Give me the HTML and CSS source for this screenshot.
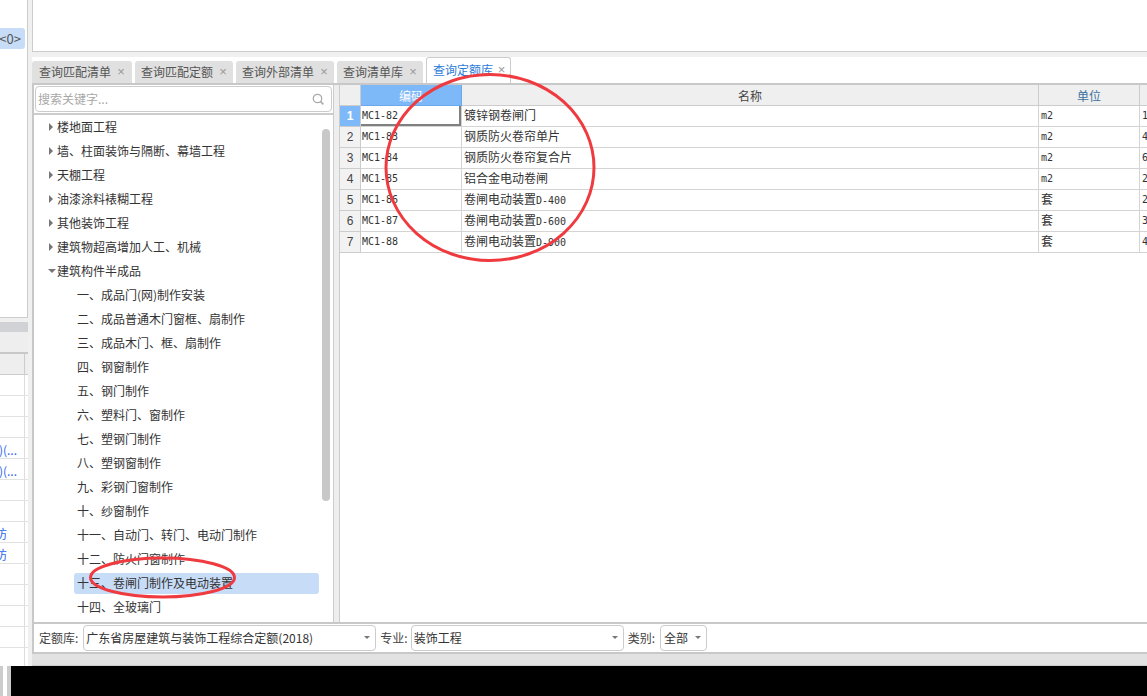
FILE: index.html
```html
<!DOCTYPE html>
<html lang="zh-CN">
<head>
  <meta charset="UTF-8" />
  <title>查询定额库</title>
  <link rel="stylesheet" href="styles.css">
</head>
<body>
  <div class="app">
    <div class="side">
      <div class="side-top">
        <div class="chip">&lt;0&gt;</div>
      </div>
      <div class="side-title"></div>
      <div class="side-tools"></div>
      <div class="side-row side-head"><span class="side-cell"></span></div>
      <div class="side-row"><span class="side-cell"></span></div>
      <div class="side-row"><span class="side-cell"></span></div>
      <div class="side-row"><span class="side-cell"></span></div>
      <div class="side-row"><span class="side-cell link wide">)(...</span></div>
      <div class="side-row"><span class="side-cell link wide">)(...</span></div>
      <div class="side-row"><span class="side-cell"></span></div>
      <div class="side-row"><span class="side-cell"></span></div>
      <div class="side-row"><span class="side-cell link">防</span></div>
      <div class="side-row"><span class="side-cell link">防</span></div>
      <div class="side-row"><span class="side-cell"></span></div>
      <div class="side-row"><span class="side-cell"></span></div>
      <div class="side-row"><span class="side-cell"></span></div>
      <div class="side-row"><span class="side-cell"></span></div>
      <div class="side-row"><span class="side-cell"></span></div>
    </div>

    <div class="main">
      <div class="top-pane"></div>

      <div class="tabs">
        <div class="tab">查询匹配清单<span class="tab-close">×</span></div>
        <div class="tab">查询匹配定额<span class="tab-close">×</span></div>
        <div class="tab">查询外部清单<span class="tab-close">×</span></div>
        <div class="tab">查询清单库<span class="tab-close">×</span></div>
        <div class="tab active">查询定额库<span class="tab-close">×</span></div>
      </div>

      <div class="panel">
        <div class="panel-body">
          <div class="tree-pane">
            <div class="search-wrap">
              <div class="search">
                <span class="search-text">搜索关键字...</span>
                <svg class="search-icon" width="14" height="14" viewBox="0 0 14 14">
                  <circle cx="6.5" cy="6.5" r="4.2" fill="none" stroke="#aaa" stroke-width="1.3"/>
                  <path d="M9.6 9.6L12.4 12.4" stroke="#aaa" stroke-width="1.6"/>
                </svg>
              </div>
            </div>
            <div class="tree">
              <div class="tree-row"><i class="arrow"></i>楼地面工程</div>
              <div class="tree-row"><i class="arrow"></i>墙、柱面装饰与隔断、幕墙工程</div>
              <div class="tree-row"><i class="arrow"></i>天棚工程</div>
              <div class="tree-row"><i class="arrow"></i>油漆涂料裱糊工程</div>
              <div class="tree-row"><i class="arrow"></i>其他装饰工程</div>
              <div class="tree-row"><i class="arrow"></i>建筑物超高增加人工、机械</div>
              <div class="tree-row"><i class="arrow open"></i>建筑构件半成品</div>
              <div class="tree-row child"><span class="tree-label">一、成品门(网)制作安装</span></div>
              <div class="tree-row child"><span class="tree-label">二、成品普通木门窗框、扇制作</span></div>
              <div class="tree-row child"><span class="tree-label">三、成品木门、框、扇制作</span></div>
              <div class="tree-row child"><span class="tree-label">四、钢窗制作</span></div>
              <div class="tree-row child"><span class="tree-label">五、钢门制作</span></div>
              <div class="tree-row child"><span class="tree-label">六、塑料门、窗制作</span></div>
              <div class="tree-row child"><span class="tree-label">七、塑钢门制作</span></div>
              <div class="tree-row child"><span class="tree-label">八、塑钢窗制作</span></div>
              <div class="tree-row child"><span class="tree-label">九、彩钢门窗制作</span></div>
              <div class="tree-row child"><span class="tree-label">十、纱窗制作</span></div>
              <div class="tree-row child"><span class="tree-label">十一、自动门、转门、电动门制作</span></div>
              <div class="tree-row child"><span class="tree-label">十二、防火门窗制作</span></div>
              <div class="tree-row child"><span class="tree-label selected">十三、卷闸门制作及电动装置</span></div>
              <div class="tree-row child"><span class="tree-label">十四、全玻璃门</span></div>
              <div class="tree-thumb"></div>
            </div>
          </div>

          <div class="splitter"></div>

          <div class="grid-wrap">
            <table class="grid">
              <colgroup>
                <col class="col-num"><col class="col-code"><col class="col-name"><col class="col-unit"><col class="col-more">
              </colgroup>
              <thead>
                <tr><th></th><th class="on">编码</th><th>名称</th><th class="unit-head">单位</th><th></th></tr>
              </thead>
              <tbody>
                <tr><th class="on">1</th><td class="mono code current">MC1-82</td><td>镀锌钢卷闸门</td><td class="mono">m2</td><td class="mono">1</td></tr>
                <tr><th>2</th><td class="mono code">MC1-83</td><td>钢质防火卷帘单片</td><td class="mono">m2</td><td class="mono">4</td></tr>
                <tr><th>3</th><td class="mono code">MC1-84</td><td>钢质防火卷帘复合片</td><td class="mono">m2</td><td class="mono">6</td></tr>
                <tr><th>4</th><td class="mono code">MC1-85</td><td>铝合金电动卷闸</td><td class="mono">m2</td><td class="mono">2</td></tr>
                <tr><th>5</th><td class="mono code">MC1-86</td><td>卷闸电动装置<span class="mono">D-400</span></td><td>套</td><td class="mono">2</td></tr>
                <tr><th>6</th><td class="mono code">MC1-87</td><td>卷闸电动装置<span class="mono">D-600</span></td><td>套</td><td class="mono">3</td></tr>
                <tr><th>7</th><td class="mono code">MC1-88</td><td>卷闸电动装置<span class="mono">D-900</span></td><td>套</td><td class="mono">4</td></tr>
              </tbody>
            </table>
          </div>
        </div>

        <div class="panel-foot">
          <label class="foot-label first">定额库:</label>
          <div class="select select-lib">广东省房屋建筑与装饰工程综合定额(2018)<i class="caret"></i></div>
          <label class="foot-label major">专业:</label>
          <div class="select select-major">装饰工程<i class="caret"></i></div>
          <label class="foot-label">类别:</label>
          <div class="select select-type">全部<i class="caret"></i></div>
        </div>
      </div>

      <div class="bottom-strip"></div>
    </div>
  </div>

  <div class="taskbar">
    <span class="bit-gray"></span><span class="bit-white"></span><span class="bit-gray wide"></span>
  </div>

  <!-- hand drawn marks on top of the screenshot -->
  <svg class="marks" width="1147" height="696" viewBox="0 0 1147 696">
    <ellipse cx="490" cy="167.5" rx="104" ry="93" />
    <ellipse cx="162.5" cy="577.5" rx="72" ry="19.5" />
  </svg>
</body>
</html>
```

FILE: styles.css
```css
* {
  box-sizing: border-box;
}

body {
  margin: 0;
  width: 1147px;
  height: 696px;
  position: relative;
  overflow: hidden;
  background-color: #f0f0f0;
  color: #333;
  font-family: "Noto Sans CJK SC", "Liberation Sans", sans-serif;
  font-size: 12px;
  line-height: 20px;
}

.app {
  display: flex;
  height: 666px;
}

/* left column, cut off by the window edge */
.side {
  width: 28px;
  flex-shrink: 0;
  overflow: hidden;
}

.side-top {
  height: 318px;
  padding-top: 28px;
  background-color: #fff;
  border-right: 1px solid #ccc;
  border-bottom: 1px solid #ccc;
}

.chip {
  display: flex;
  justify-content: flex-end;
  width: 25px;
  height: 21px;
  line-height: 21px;
  padding-right: 4px;
  background-color: #c7dcf7;
  border-radius: 0 3px 3px 0;
  color: #555;
  font-size: 13px;
  white-space: nowrap;
  overflow: hidden;
}

.side-title {
  height: 10px;
  margin-top: 4px;
  background-color: #d0d2d6;
}

.side-tools {
  height: 22px;
  background-color: #eee;
  border-bottom: 2px solid #c8c8c8;
}

.side-row {
  height: 21px;
  padding-right: 3px;
  background-color: #fff;
  border-bottom: 1px solid #e2e2e2;
}

.side-head {
  background-color: #eee;
  border-bottom-color: #ccc;
}

.side-cell {
  display: flex;
  justify-content: flex-end;
  height: 20px;
  padding-right: 17px;
  border-right: 1px solid #ddd;
  overflow: hidden;
  white-space: nowrap;
}

.side-cell.wide {
  padding-right: 7px;
}

.side-head .side-cell {
  border-right-color: #ccc;
}

.link {
  color: #2a66f0;
  line-height: 23px;
}

.main {
  flex: 1;
  min-width: 0;
  margin-left: 4px;
  display: flex;
  flex-direction: column;
}

.top-pane {
  height: 52px;
  flex-shrink: 0;
  background-color: #fff;
  border-left: 1px solid #ccc;
  border-bottom: 1px solid #ccc;
}

/* tabs */
.tabs {
  display: flex;
  align-items: flex-end;
  gap: 3px;
  height: 26px;
  margin-top: 5px;
  flex-shrink: 0;
  background-color: #fff;
}

.tab {
  display: flex;
  align-items: center;
  height: 22px;
  padding: 0 0 0 6px;
  background-color: #e0e0e0;
  border-radius: 3px 3px 0 0;
  color: #555;
  white-space: nowrap;
}

.tab:first-child {
  padding-left: 7px;
  padding-right: 1px;
}

.tab-close {
  width: 20px;
  text-align: center;
  color: #999;
  font-family: "Liberation Sans", sans-serif;
  font-size: 13px;
}

.tab.active {
  width: 85px;
  height: 26px;
  padding-bottom: 2px;
  background-color: #fff;
  border: 1px solid #ccc;
  border-bottom: none;
  color: #2b7cd9;
}

.tab.active .tab-close {
  width: 18px;
}

/* main panel */
.panel {
  display: flex;
  flex-direction: column;
  height: 571px;
  flex-shrink: 0;
  background-color: #fff;
  border-top: 2px solid #c8c8c8;
  border-bottom: 2px solid #c8c8c8;
  border-left: 2px solid #c8c8c8;
}

.panel-body {
  display: flex;
  flex: 1;
  min-height: 0;
}

.tree-pane {
  width: 300px;
  flex-shrink: 0;
  display: flex;
  flex-direction: column;
  border-right: 1px solid #ccc;
}

.search-wrap {
  height: 30px;
  padding: 1px 1px 0;
  flex-shrink: 0;
  border-bottom: 2px solid #ccc;
}

.search {
  display: flex;
  align-items: center;
  justify-content: space-between;
  height: 26px;
  padding: 0 6px 0 2px;
  border: 1px solid #ccc;
  border-radius: 4px;
}

.search-text {
  color: #a8a8a8;
}

.tree {
  position: relative;
  flex: 1;
  overflow: hidden;
}

.tree-row {
  display: flex;
  align-items: center;
  height: 24px;
  padding-left: 15px;
  white-space: nowrap;
}

.tree-row.child {
  padding-left: 40px;
}

.tree-label {
  display: block;
  width: 245px;
  height: 21px;
  padding-left: 3px;
  line-height: 20px;
  border-radius: 3px;
}

.tree-label.selected {
  background-color: #c7dcf7;
}

.arrow {
  width: 0;
  height: 0;
  margin-right: 4px;
  border-top: 4px solid transparent;
  border-bottom: 4px solid transparent;
  border-left: 4px solid #777;
}

.arrow.open {
  margin-left: -1px;
  margin-right: 1px;
  border-left: 4px solid transparent;
  border-right: 4px solid transparent;
  border-top: 4px solid #777;
  border-bottom: none;
}

.tree-thumb {
  position: absolute;
  top: 14px;
  left: 288px;
  width: 8px;
  height: 372px;
  border-radius: 4px;
  background-color: #c8c8c8;
}

.splitter {
  width: 6px;
  flex-shrink: 0;
  background-color: #eee;
  border-right: 1px solid #ccc;
}

/* quota grid */
.grid-wrap {
  flex: 1;
  min-width: 0;
  overflow: hidden;
}

.grid {
  width: 860px;
  table-layout: fixed;
  border-collapse: separate;
  border-spacing: 0;
}

.col-num { width: 21px; }
.col-code { width: 101px; }
.col-name { width: 577px; }
.col-unit { width: 101px; }
.col-more { width: 60px; }

.grid th,
.grid td {
  height: 21px;
  padding: 0;
  border-right: 1px solid #d4d4d4;
  border-bottom: 1px solid #d4d4d4;
  white-space: nowrap;
  overflow: hidden;
}

.grid th {
  padding-top: 1px;
  line-height: 19px;
  background-color: #efefef;
  font-weight: normal;
  text-align: center;
  color: #444;
  border-color: #ccc;
}

.grid tbody th {
  font-family: "Liberation Sans", sans-serif;
  background-color: #f2f2f2;
}

.grid td {
  padding-left: 2px;
  line-height: 18px;
  vertical-align: top;
}

.grid th.on {
  background-color: #7db8f8;
  color: #fff;
  font-weight: bold;
}

.grid thead th.on {
  font-weight: normal;
  border-color: #6aa9ee;
}

.unit-head {
  color: #3d6f9e !important;
}

.mono {
  font-family: "DejaVu Sans Mono", monospace;
  font-size: 10px;
  line-height: 12px;
}

.grid td.mono {
  line-height: 19px;
}

.grid td.code {
  padding-left: 1px;
}

.grid td.current {
  box-shadow: inset -2px -2px 0 #808080;
}

/* footer with the selects */
.panel-foot {
  display: flex;
  align-items: center;
  height: 30px;
  flex-shrink: 0;
  border-top: 2px solid #c8c8c8;
  padding-bottom: 1px;
}

.foot-label {
  margin: 0 4px;
  color: #444;
  white-space: nowrap;
}

.foot-label.first {
  margin-left: 5px;
  margin-right: 5px;
}

.foot-label.major {
  margin-right: 3px;
}

.select {
  display: flex;
  align-items: center;
  justify-content: space-between;
  height: 26px;
  padding: 0 5px 0 2px;
  border: 1px solid #ccc;
  border-radius: 4px;
  white-space: nowrap;
}

.select-lib { width: 293px; }
.select-major { width: 213px; }
.select-type { width: 47px; margin-left: 1px; padding-left: 3px; }

.caret {
  width: 0;
  height: 0;
  border-left: 3px solid transparent;
  border-right: 3px solid transparent;
  border-top: 3px solid #777;
}

.bottom-strip {
  flex: 1;
  background-color: #e2e2e2;
  border-bottom: 1px solid #ccc;
}

/* bottom bar of the window */
.taskbar {
  display: flex;
  height: 30px;
  background-color: #000;
}

.bit-gray {
  width: 3px;
  background-color: #ccc;
}

.bit-gray.wide {
  width: 4px;
}

.bit-white {
  width: 4px;
  background-color: #fff;
}

.marks {
  position: absolute;
  top: 0;
  left: 0;
  pointer-events: none;
}

.marks ellipse {
  fill: none;
  stroke: #ef3b3f;
  stroke-width: 3;
}
```
